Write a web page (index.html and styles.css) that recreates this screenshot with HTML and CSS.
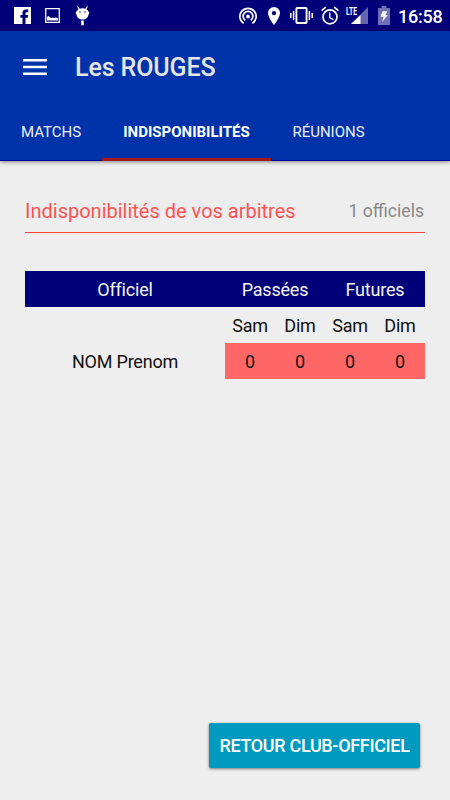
FILE: index.html
```html
<!DOCTYPE html>
<html lang="fr">
<head>
    <meta charset="UTF-8">
    <meta name="viewport" content="width=device-width, initial-scale=1.0">
    <title>Les ROUGES</title>
    <link rel="stylesheet" href="styles.css">
</head>
<body>

    <!-- Barre d'état -->
    <div class="status-bar">
        <svg class="facebook" width="17" height="17" viewBox="0 0 17 17">
            <path fill="#fff" d="M0 0h17v17h-5.500v-6.300h2.300l.4-2.600h-2.700V6.500c0-.8.400-1.300 1.400-1.300h1.300V2.600h-2.400C9.500 2.600 8.500 4 8.500 6.100v2H6.400v2.600h2.100V17H0z"/>
        </svg>
        <svg class="picture" width="15" height="15" viewBox="0 0 15 15">
            <path fill="none" stroke="#fff" stroke-width="1.300" d="M.7.7h13.600v13.600H.7z"/>
            <path fill="#fff" d="M2 12.500V9l1.500-1 2.500 2 2-.500 1 .7 2-.7 2 1v2z"/>
        </svg>
        <svg class="debug" width="15" height="20" viewBox="0 0 15 20">
            <path fill="none" stroke="#fff" stroke-width="1.200" d="M2.500.5l2 3M12.500.5l-2 3"/>
            <path fill="#fff" d="M1.500 5.500C2.500 3.200 5 2.300 7.500 2.300s5 .9 6 3.200l1 1.500-1 1.500c-.3 3-2.800 5-6 5s-5.700-2-6-5L.5 7zM6.200 14.500h2.600v4.700H6.200z"/>
            <circle cx="5" cy="6" r=".7" fill="#000078"/>
            <circle cx="10" cy="6" r=".7" fill="#000078"/>
        </svg>
        <svg class="hotspot" width="18" height="18" viewBox="0 0 18 18">
            <g fill="none" stroke="#fff" stroke-width="1.700">
                <path d="M4.700 16.400a8.150 8.150 0 1 1 8.600 0"/>
                <path d="M6.300 13.400a4.900 4.900 0 1 1 5.400 0"/>
            </g>
            <circle cx="9" cy="9.500" r="2" fill="#fff"/>
        </svg>
        <svg class="location" width="12" height="18" viewBox="0 0 12 18">
            <path fill="#fff" fill-rule="evenodd" d="M6 0a6 6 0 0 0-6 6c0 4.500 6 12 6 12s6-7.500 6-12a6 6 0 0 0-6-6zm0 3.900a2.200 2.200 0 1 1 0 4.400 2.200 2.200 0 0 1 0-4.400z"/>
        </svg>
        <svg class="vibrate" width="23" height="17" viewBox="0 0 23 17">
            <rect x="6.400" y="1" width="10.200" height="15" rx=".8" fill="none" stroke="#fff" stroke-width="1.900"/>
            <path fill="none" stroke="#fff" stroke-width="1.500" d="M.8 6v5M3.600 4v9M19.400 4v9M22.200 6v5"/>
        </svg>
        <svg class="alarm" width="18" height="19" viewBox="0 0 18 19">
            <g fill="none" stroke="#fff" stroke-width="1.700">
                <circle cx="9" cy="10.800" r="7"/>
                <path d="M.6 4.700l4.200-3.500M17.400 4.700l-4.200-3.500"/>
                <path stroke-width="1.400" d="M8.700 6.500v5l3.700 2.200"/>
            </g>
        </svg>
        <svg class="signal" width="22" height="19" viewBox="0 0 22 19">
            <path fill="#6666ae" d="M22 1v17H5z"/>
            <path fill="#fff" d="M14.500 9V18H5z"/>
            <path fill="#000078" d="M0 0h12.500v9.500H0z"/>
            <text x="0" y="8.800" textLength="11" lengthAdjust="spacingAndGlyphs">LTE</text>
        </svg>
        <svg class="battery" width="12" height="19" viewBox="0 0 12 19">
            <path fill="#7070b4" d="M3.700 0h4.600v2H12v17H0V2h3.700z"/>
            <path fill="#fff" d="M4.500 5.300h4.700L7.500 9h2.300L4.300 15.800l1.200-5H2.400z"/>
        </svg>
        <span class="clock">16:58</span>
    </div>

    <header class="app-header">
        <div class="toolbar">
            <svg class="menu" width="24" height="16" viewBox="0 0 24 16">
                <path fill="#fff" d="M0 0h24v2.600H0zM0 6.700h24v2.600H0zM0 13.400h24V16H0z"/>
            </svg>
            <h1>Les ROUGES</h1>
        </div>
        <nav class="tabs">
            <a class="tab tab-matchs">MATCHS</a>
            <a class="tab tab-indispo active">INDISPONIBILITÉS</a>
            <a class="tab tab-reunions">RÉUNIONS</a>
        </nav>
    </header>

    <main>
        <div class="section-title">
            <h2>Indisponibilités de vos arbitres</h2>
            <span class="count">1 officiels</span>
        </div>

        <!-- Tableau des indisponibilités -->
        <table>
            <thead>
                <tr>
                    <th class="name">Officiel</th>
                    <th colspan="2">Passées</th>
                    <th colspan="2">Futures</th>
                </tr>
            </thead>
            <tbody>
                <tr>
                    <td></td>
                    <td>Sam</td>
                    <td>Dim</td>
                    <td>Sam</td>
                    <td>Dim</td>
                </tr>
                <tr>
                    <td>NOM Prenom</td>
                    <td class="value">0</td>
                    <td class="value">0</td>
                    <td class="value">0</td>
                    <td class="value">0</td>
                </tr>
            </tbody>
        </table>

        <button class="back-button">RETOUR CLUB-OFFICIEL</button>
    </main>

</body>
</html>
```
FILE: styles.css
```css
body {
    font-family: Roboto, sans-serif;
    background-color: #eeeeee;
    color: #111;
    margin: 0;
    height: 800px;
    display: flex;
    flex-direction: column;
    overflow: hidden;
}

.status-bar {
    height: 31px;
    box-sizing: border-box;
    padding: 0 8px 0 14px;
    display: flex;
    align-items: center;
    background-color: #000078;
}

.status-bar svg {
    flex: none;
}

.picture {
    margin-left: 14px;
}

.debug {
    margin-left: 15px;
    margin-top: 1px;
}

.hotspot {
    margin-left: auto;
}

.location {
    margin-left: 11px;
}

.vibrate {
    margin-left: 10px;
}

.alarm {
    margin-left: 8px;
}

.signal {
    margin-left: 7px;
}

.signal text {
    font-size: 10.5px;
    font-weight: bold;
    fill: #fff;
}

.battery {
    margin-left: 10px;
}

.clock {
    width: 44px;
    margin-left: 8px;
    padding-top: 2px;
    color: #fff;
    font-size: 18px;
    font-weight: 500;
    letter-spacing: -0.25px;
    line-height: 29px;
    white-space: nowrap;
}

.app-header {
    height: 130px;
    box-sizing: border-box;
    background-color: #0033aa;
    border-bottom: 1px solid #0000a0;
    box-shadow: 0 1px 4px rgba(0, 0, 0, 0.45);
    display: flex;
    flex-direction: column;
}

.toolbar {
    height: 72px;
    padding-left: 23px;
    display: flex;
    align-items: center;
}

h1 {
    color: #e6e6e6;
    font-size: 25px;
    font-weight: 500;
    letter-spacing: -0.1px;
    margin: 0 0 0 28px;
}

.tabs {
    flex: 1;
    display: flex;
}

.tab {
    box-sizing: border-box;
    padding-top: 3px;
    border-bottom: 2px solid transparent;
    display: flex;
    align-items: center;
    justify-content: center;
    color: #f0f0fa;
    font-size: 15px;
}

.tab-matchs {
    width: 102px;
}

.tab-indispo {
    width: 169px;
}

.tab-reunions {
    width: 115px;
}

.tab.active {
    color: #fff;
    font-weight: bold;
    margin-bottom: -1px;
    border-bottom: 3px solid #a01818;
}

main {
    flex: 1;
    padding: 29px 25px 32px;
    display: flex;
    flex-direction: column;
}

.section-title {
    height: 42px;
    border-bottom: 1px solid #ff4444;
    display: flex;
    align-items: center;
    justify-content: space-between;
    white-space: nowrap;
}

h2 {
    color: #ff5252;
    font-size: 20px;
    font-weight: normal;
    margin: 0;
}

.count {
    padding-right: 1px;
    color: #888;
    font-size: 17.6px;
}

table {
    width: 400px;
    margin-top: 38px;
    table-layout: fixed;
    border-collapse: collapse;
    font-size: 18px;
    letter-spacing: -0.2px;
    text-align: center;
}

th, td {
    height: 35px;
    padding: 1px 0 0;
    font-weight: normal;
}

th {
    background-color: #000078;
    color: #f4f4f4;
}

.name {
    width: 200px;
}

.value {
    background-color: #ff6666;
}

.back-button {
    width: 211px;
    height: 45px;
    margin: auto 5px 0 auto;
    padding: 0;
    background-color: #0099bf;
    color: #fff;
    border: none;
    border-radius: 2px;
    box-shadow: 0 1px 3px rgba(0, 0, 0, 0.5);
    font-family: inherit;
    font-size: 18px;
    font-weight: 500;
    letter-spacing: -0.33px;
    white-space: nowrap;
}
```
